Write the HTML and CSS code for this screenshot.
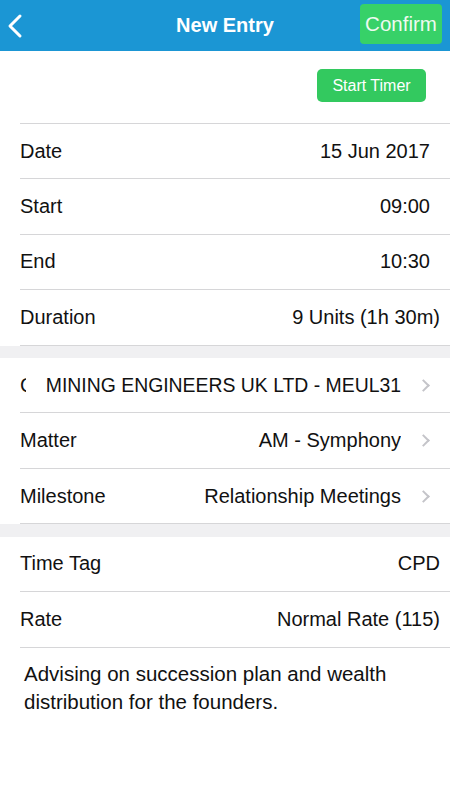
FILE: index.html
```html
<!DOCTYPE html>
<html lang="en">

<head>
  <meta charset="UTF-8" />
  <meta name="viewport" content="width=device-width, initial-scale=1.0" />
  <title>New Entry</title>
  <link rel="stylesheet" href="styles.css">
</head>

<body>
  <header class="nav-bar">
    <button class="back-btn" aria-label="Back">
      <svg width="18" height="26" viewBox="0 0 18 26">
        <path d="M14 3 L4 13 L14 23" fill="none" stroke="#fff" stroke-width="3" stroke-linecap="round" stroke-linejoin="round" />
      </svg>
    </button>
    <h1 class="nav-title">New Entry</h1>
    <button class="confirm-btn">Confirm</button>
  </header>

  <div class="timer-bar">
    <button class="timer-btn">Start Timer</button>
  </div>

  <ul class="group first-group">
    <li class="row"><span class="label">Date</span><span class="value">15 Jun 2017</span></li>
    <li class="row"><span class="label">Start</span><span class="value">09:00</span></li>
    <li class="row"><span class="label">End</span><span class="value">10:30</span></li>
    <li class="row wide"><span class="label">Duration</span><span class="value">9 Units (1h 30m)</span></li>
  </ul>

  <div class="gap"></div>

  <ul class="group">
    <li class="row link">
      <span class="label clipped">Client</span>
      <span class="value client">MINING ENGINEERS UK LTD - MEUL31</span>
      <span class="chevron"></span>
    </li>
    <li class="row link">
      <span class="label">Matter</span>
      <span class="value">AM - Symphony</span>
      <span class="chevron"></span>
    </li>
    <li class="row link">
      <span class="label">Milestone</span>
      <span class="value">Relationship Meetings</span>
      <span class="chevron"></span>
    </li>
  </ul>

  <div class="gap"></div>

  <ul class="group">
    <li class="row wide"><span class="label">Time Tag</span><span class="value">CPD</span></li>
    <li class="row wide"><span class="label">Rate</span><span class="value">Normal Rate (115)</span></li>
  </ul>

  <p class="notes">Advising on succession plan and wealth distribution for the founders.</p>
</body>

</html>
```

FILE: styles.css
```css
:root {
  --nav-blue: #1b96d4;
  --green: #37d168;
  --green-dark: #33c95f;
  --text-main: #111111;
  --separator: #d6d6d8;
  --group-gap: #f0f0f2;
  --chevron: #c4c4c9;
}

* {
  box-sizing: border-box;
}

body {
  margin: 0;
  font-family: "Liberation Sans", Arial, sans-serif;
  background: #fff;
  color: var(--text-main);
}

.nav-bar {
  height: 51px;
  background: var(--nav-blue);
  display: flex;
  align-items: center;
  justify-content: space-between;
  padding: 0 8px 0 6px;
  position: relative;
}

.back-btn {
  background: none;
  border: none;
  padding: 0;
  width: 24px;
  height: 30px;
  display: flex;
  align-items: center;
  margin-top: 1px;
}

.nav-title {
  position: absolute;
  left: 0;
  right: 0;
  margin: 0;
  text-align: center;
  font-size: 20px;
  font-weight: 700;
  color: #fff;
  pointer-events: none;
}

.confirm-btn {
  height: 40px;
  width: 82px;
  margin-top: -3px;
  background: var(--green);
  color: #eefaf0;
  border: none;
  border-radius: 4px;
  font-family: inherit;
  font-size: 20.5px;
  padding: 0;
}

.timer-bar {
  height: 72px;
  display: flex;
  justify-content: flex-end;
  align-items: flex-start;
  padding: 18px 24px 0 0;
}

.timer-btn {
  width: 109px;
  height: 33px;
  background: var(--green-dark);
  color: #fff;
  border: none;
  border-radius: 5px;
  font-family: inherit;
  font-size: 16px;
  padding: 0;
}

.group {
  list-style: none;
  margin: 0;
  padding: 0;
}

.first-group {
  border-top: 1px solid var(--separator);
  margin-left: 20px;
}

.first-group .row {
  margin-left: 0;
}

.row {
  height: 55.4px;
  margin-left: 20px;
  padding-right: 20px;
  border-bottom: 1px solid var(--separator);
  display: flex;
  align-items: center;
  font-size: 20px;
}

.row.wide {
  padding-right: 10px;
}

.label {
  flex-shrink: 0;
  white-space: nowrap;
}

.label.clipped {
  width: 6px;
  overflow: hidden;
}

.value {
  flex: 1;
  text-align: right;
  white-space: nowrap;
  overflow: hidden;
}

.value.client {
  font-size: 19.4px;
}

.chevron {
  width: 9px;
  height: 9px;
  border-top: 2px solid var(--chevron);
  border-right: 2px solid var(--chevron);
  transform: rotate(45deg);
  margin-left: 18px;
  margin-right: 2px;
  flex-shrink: 0;
}

.gap {
  height: 12.5px;
  background: var(--group-gap);
}

.notes {
  margin: 12px 0 0 24px;
  padding-right: 20px;
  font-size: 20.5px;
  line-height: 28px;
}
```
